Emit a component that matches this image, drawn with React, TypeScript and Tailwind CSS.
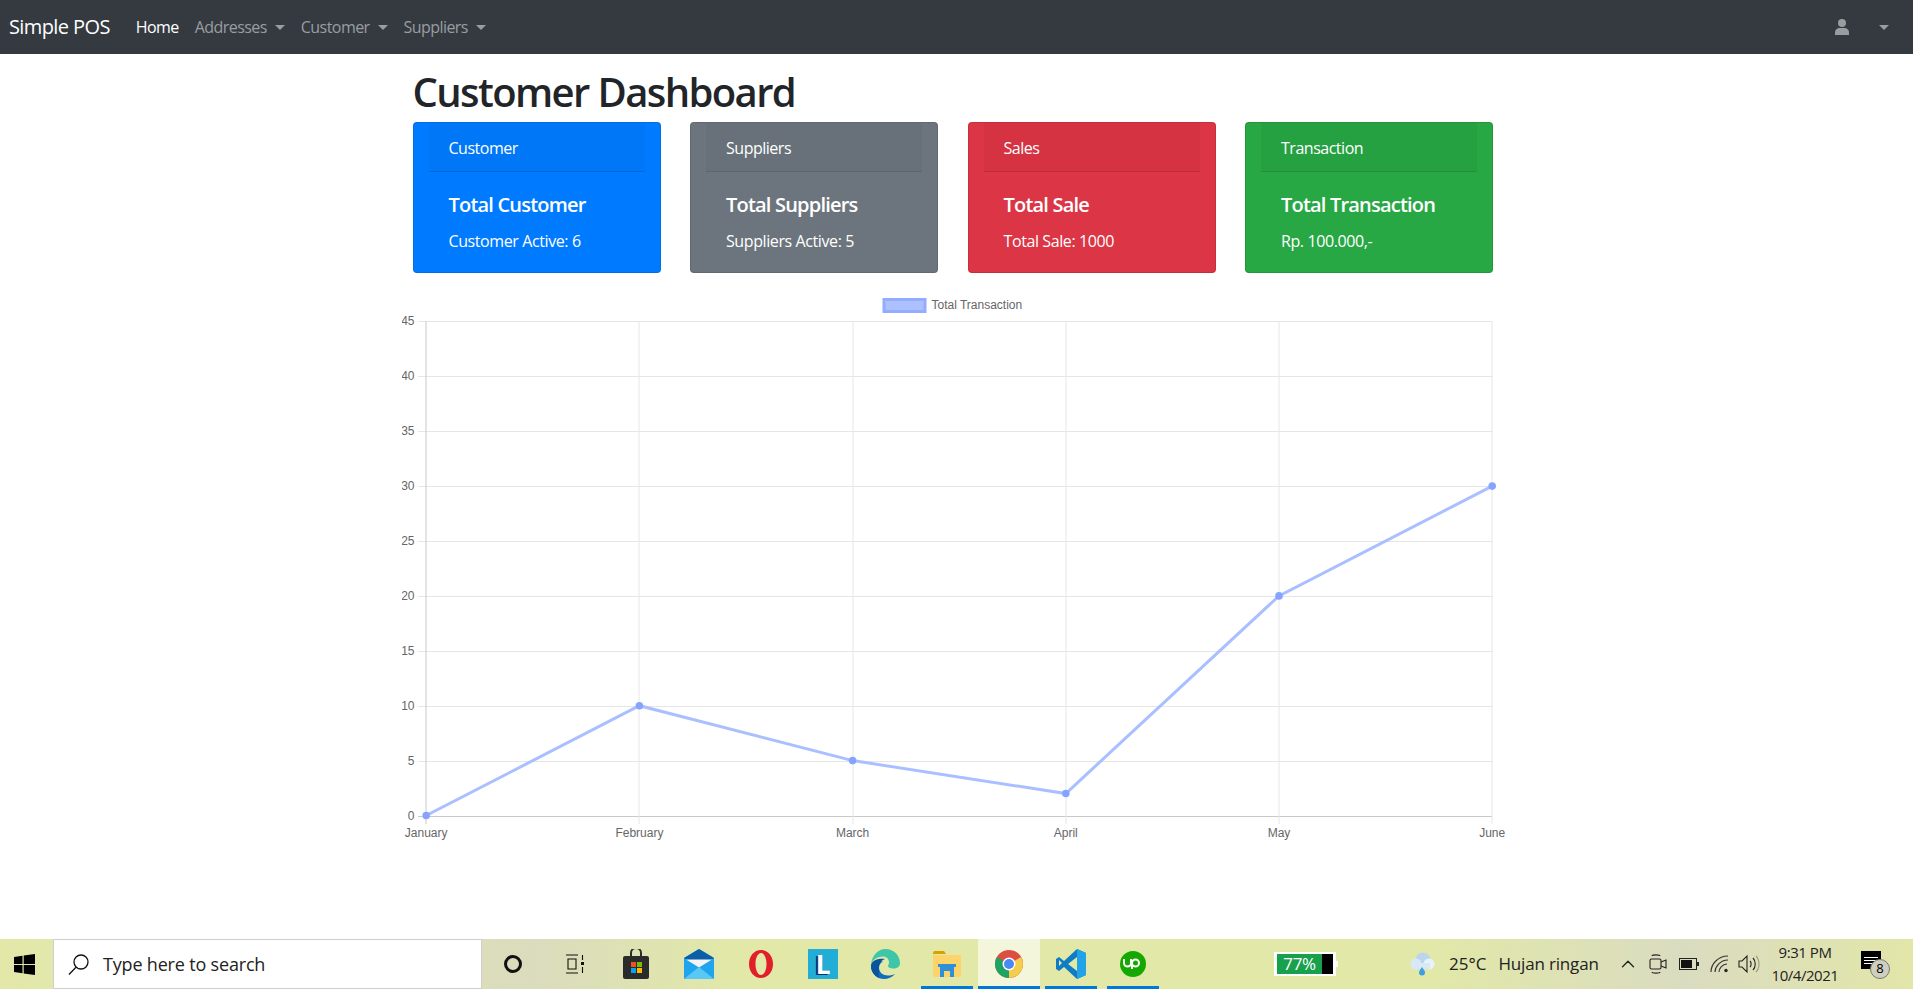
import { ChevronUp } from 'lucide-react';

const sans = "font-['Open_Sans','Noto_Sans',sans-serif]";

const cards = [
  { head: 'Customer', title: 'Total Customer', text: 'Customer Active: 6', bg: 'bg-[#007bff]' },
  { head: 'Suppliers', title: 'Total Suppliers', text: 'Suppliers Active: 5', bg: 'bg-[#6c757d]' },
  { head: 'Sales', title: 'Total Sale', text: 'Total Sale: 1000', bg: 'bg-[#dc3545]' },
  { head: 'Transaction', title: 'Total Transaction', text: 'Rp. 100.000,-', bg: 'bg-[#28a745]' },
];

const months = ['January', 'February', 'March', 'April', 'May', 'June'];
const values = [0, 10, 5, 2, 20, 30];
const ticks = [0, 5, 10, 15, 20, 25, 30, 35, 40, 45];

const xAt = (i: number) => 425.7 + i * 213.2;
const yAt = (v: number) => 814.5 - v * 10.98;

function Caret() {
  return <span className="ml-[8px] mt-[1px] h-0 w-0 border-x-[5px] border-t-[5px] border-x-transparent border-t-current" />;
}

function NavItem({ label, dropdown, active }: { label: string; dropdown?: boolean; active?: boolean }) {
  return (
    <a className={`flex items-center px-2 ${active ? 'text-white' : 'text-[#9a9da0]'}`}>
      {label}
      {dropdown && <Caret />}
    </a>
  );
}

function Navbar() {
  return (
    <nav className={`flex h-[54px] shrink-0 items-center bg-[#343a40] pl-[9px] pr-[24px] text-[16px] ${sans} tracking-[-0.035em]`}>
      <a className="mr-[18px] text-[20px] tracking-[-0.03em] text-white">Simple POS</a>
      <NavItem label="Home" active />
      <NavItem label="Addresses" dropdown />
      <NavItem label="Customer" dropdown />
      <NavItem label="Suppliers" dropdown />
      <div className="ml-auto flex items-center text-[#9a9da0]">
        <svg width="16" height="16" viewBox="0 0 16 16" fill="currentColor">
          <circle cx="8" cy="4" r="4" />
          <path d="M1 16v-2.5C1 10.5 3.500 9 5.500 9h5c2 0 4.500 1.500 4.500 4.500V16z" />
        </svg>
        <span className="ml-[29px] h-0 w-0 border-x-[5px] border-t-[5px] border-x-transparent border-t-current" />
      </div>
    </nav>
  );
}

function Chart() {
  return (
    <svg viewBox="401.5 285 1110 560" width="1110" height="560" className="mt-[13px] block">
      <rect x="883.500" y="298.500" width="41" height="12" fill="#adc1ff" stroke="#93acff" strokeWidth="3" />
      <text x="931" y="308" fontSize="12" fill="#666" fontFamily="Liberation Sans, sans-serif">Total Transaction</text>
      {ticks.map((t) => (
        <g key={t}>
          <line
            x1="417.500"
            x2="1491.700"
            y1={Math.round(yAt(t)) + 0.5}
            y2={Math.round(yAt(t)) + 0.5}
            stroke={t === 0 ? '#c9c9c9' : '#e6e6e6'}
          />
          <text x="414" y={yAt(t) + 4} fontSize="12" fill="#666" textAnchor="end" fontFamily="Liberation Sans, sans-serif">{t}</text>
        </g>
      ))}
      {months.map((m, i) => (
        <g key={m}>
          <line
            x1={Math.floor(xAt(i)) + 0.5}
            x2={Math.floor(xAt(i)) + 0.5}
            y1="320"
            y2="823"
            stroke={i === 0 ? '#c9c9c9' : '#e6e6e6'}
          />
          <text x={xAt(i)} y="836" fontSize="12" fill="#666" textAnchor="middle" fontFamily="Liberation Sans, sans-serif">{m}</text>
        </g>
      ))}
      <polyline
        points={values.map((v, i) => `${xAt(i)},${yAt(v)}`).join(' ')}
        fill="none"
        stroke="#a9bfff"
        strokeWidth="3"
      />
      {values.map((v, i) => (
        <circle key={i} cx={xAt(i)} cy={yAt(v)} r="3.800" fill="#86a4ff" />
      ))}
    </svg>
  );
}

function Slot({ children, line, active }: { children: React.ReactNode; line?: boolean; active?: boolean }) {
  return (
    <div className={`relative flex h-full w-[62px] items-center justify-center ${active ? 'bg-[#f4f6dc]' : ''}`}>
      {children}
      {line && <span className={`absolute bottom-0 h-[3px] bg-[#0078d7] ${active ? 'inset-x-0' : 'inset-x-[5px]'}`} />}
    </div>
  );
}

function Taskbar() {
  return (
    <footer className={`mt-auto flex h-[50px] shrink-0 items-center bg-[linear-gradient(90deg,#e3e8a9_0%,#dadcbd_28%,#e1e8a8_38%,#e1e8a8_75%,#dadcc0_88%,#e2e6a8_100%)] ${sans}`}>
      <div className="flex h-full w-[53px] shrink-0 items-center justify-center pr-[5px]">
        <svg width="21" height="21" viewBox="0 0 21 21" fill="#000">
          <path d="M0 3l8.500-1.200v8.200H0zM9.700 1.600L21 0v10H9.700zM0 11h8.500v8.200L0 18zM9.700 11H21v10L9.700 19.400z" />
        </svg>
      </div>
      <div className="flex h-full w-[429px] shrink-0 items-center border border-[#cfcfcf] bg-white pl-[14px] text-[18px] tracking-[-0.01em] text-[#222]">
        <svg width="21" height="21" viewBox="0 0 21 21" fill="none" stroke="#111" strokeWidth="1.300">
          <circle cx="13" cy="8" r="7" />
          <path d="M8 13.200L1 20.500" />
        </svg>
        <span className="ml-[14px]">Type here to search</span>
      </div>
      <Slot>
        <span className="h-[18px] w-[18px] rounded-full border-[3px] border-[#111]" />
      </Slot>
      <Slot>
        <svg width="20" height="20" viewBox="0 0 20 20" fill="none" stroke="#111" strokeWidth="1.100">
          <path d="M1 1h12M1 19h12M3 5h8v10H3zM17.500 1v5M17.500 13v6" />
          <rect x="16" y="8" width="3" height="3" fill="#111" stroke="none" />
        </svg>
      </Slot>
      <Slot>
        <svg className="-ml-[2px]" width="28" height="30" viewBox="0 0 28 30">
          <path d="M9 8V4a5 5 0 0 1 10 0v4" fill="none" stroke="#2b2b2b" strokeWidth="2" />
          <rect x="1" y="7" width="26" height="23" rx="2" fill="#2b2b2b" />
          <rect x="9" y="13" width="5" height="5" fill="#f25022" />
          <rect x="15" y="13" width="5" height="5" fill="#7fba00" />
          <rect x="9" y="19" width="5" height="5" fill="#00a4ef" />
          <rect x="15" y="19" width="5" height="5" fill="#ffb900" />
        </svg>
      </Slot>
      <Slot>
        <svg width="30" height="30" viewBox="0 0 30 30">
          <path d="M0 9L15 0l15 9v21H0z" fill="#1fa5ee" />
          <path d="M15 0l15 9-15 9L0 9z" fill="#0a5fa8" />
          <path d="M2 10.500h26L15 18.500z" fill="#f4f4f4" />
          <path d="M0 30l15-12 15 12z" fill="#5ac8f5" />
        </svg>
      </Slot>
      <Slot>
        <svg width="26" height="30" viewBox="0 0 26 30">
          <path
            fillRule="evenodd"
            d="M13 1c7 0 12 6.300 12 14s-5 14-12 14S1 22.700 1 15 6 1 13 1zm0 3c-3.300 0-5.500 5-5.500 11s2.200 11 5.500 11 5.500-5 5.500-11S16.300 4 13 4z"
            fill="#e01f2a"
          />
        </svg>
      </Slot>
      <Slot>
        <div className="flex h-[30px] w-[30px] items-center justify-center bg-[#22add7] text-[26px] leading-none font-bold text-white [text-shadow:-2px_1px_0_#0a2a6a]">
          L
        </div>
      </Slot>
      <Slot>
        <svg width="30" height="30" viewBox="0 0 30 30">
          <path d="M1 17C1 7 8 0 15.500 0 24 0 30 6.500 30 14c0 4-3 5.500-7 5.500-3 0-5-1-5-2.500 0-1 1-1.500 1-3.500 0-4-3-6-6-6-6 0-12 4-12 9.500z" fill="#3ec6a8" />
          <path d="M1 17c0 7 6 13 13 13 4 0 8-1.500 11-5-3 1.500-5 1.500-7 1.500-5 0-9-3-9-8 0-3 2-5 4-6-6 0-12 1-12 4.500z" fill="#0f6cbd" />
          <path d="M9 18c0-4 3-7 6-8-3-1-14 0-14 7 0 6 4 10 8 12-1-3-0-7 0-11z" fill="#0a549e" />
        </svg>
      </Slot>
      <Slot line>
        <svg width="28" height="26" viewBox="0 0 28 26">
          <path d="M0 2a2 2 0 0 1 2-2h9l2 3H0z" fill="#d9a100" />
          <path d="M0 4h28v20a2 2 0 0 1-2 2H2a2 2 0 0 1-2-2z" fill="#fcd469" />
          <path d="M7 26V16h14v10h-4v-6h-6v6z" fill="#2f8fd8" />
          <rect x="5" y="13" width="18" height="3" fill="#2f8fd8" />
        </svg>
      </Slot>
      <Slot line active>
        <svg width="28" height="28" viewBox="0 0 28 28">
          <circle cx="14" cy="14" r="14" fill="#db4f43" />
          <path d="M14 14L26.100 7A14 14 0 0 1 14 28z" fill="#f5cc4b" />
          <path d="M14 14L14 28A14 14 0 0 1 1.900 7z" fill="#1fa363" />
          <circle cx="14" cy="14" r="6.500" fill="#fff" />
          <circle cx="14" cy="14" r="5" fill="#4a89f3" />
        </svg>
      </Slot>
      <Slot line>
        <svg width="30" height="30" viewBox="0 0 30 30">
          <path d="M21 0l9 4v22l-9 4-13-12-5 4-3-2v-10l3-2 5 4z" fill="#0f7cc4" />
          <path d="M21 0l9 4v22l-9 4z" fill="#22a3e8" />
          <path d="M21 8v14l-9-7z" fill="#e1e8a8" />
          <path d="M3 11l3 3-3 3z" fill="#e1e8a8" />
        </svg>
      </Slot>
      <Slot line>
        <div className="flex h-[26px] w-[26px] items-center justify-center rounded-full bg-[#14a800]">
          <svg width="20" height="12" viewBox="0 0 20 12" fill="none" stroke="#fff" strokeWidth="2">
            <path d="M1 1v4a3.500 3.500 0 0 0 7 0V1M9 11V5a3.500 3.500 0 1 1 3.500 3.500c-1 0-2-.5-3-1.500" />
          </svg>
        </div>
      </Slot>

      <div className="ml-[110px] flex h-[24px] w-[62px] shrink-0 items-center bg-white px-[3px]">
        <div className="flex h-[20px] w-[56px] bg-black">
          <span className="flex w-[45px] items-center justify-center bg-[#18a04d] text-[17px] tracking-[-0.02em] text-white">77%</span>
        </div>
      </div>
      <span className="h-[6px] w-[2px] shrink-0 self-center bg-white" />

      <svg className="ml-[71px] shrink-0" width="26" height="24" viewBox="0 0 26 24">
        <circle cx="14" cy="8" r="7.500" fill="#bcd4ec" />
        <circle cx="7" cy="12" r="5.500" fill="#d8e8f6" />
        <circle cx="20" cy="12" r="5.500" fill="#e8f2fb" />
        <rect x="6" y="11" width="15" height="6" fill="#d8e8f6" />
        <path d="M13 15c2 3 3 4 3 5.500a3 3 0 0 1-6 0c0-1.500 1-2.500 3-5.500z" fill="#3b9fe0" />
      </svg>
      <span className="ml-[14px] whitespace-nowrap text-[17px] text-[#222]">25°C</span>
      <span className="ml-[12px] whitespace-nowrap text-[17px] tracking-[-0.01em] text-[#222]">Hujan ringan</span>

      <ChevronUp className="ml-[18px] shrink-0 text-[#222]" size={22} strokeWidth={1.400} />
      <svg className="ml-[10px] shrink-0" width="18" height="22" viewBox="0 0 18 22" fill="none" stroke="#222" strokeWidth="1.100">
        <path d="M3 3c0-1.500 8-1.500 8 0M3 19c0 1.500 8 1.500 8 0" />
        <rect x="1" y="6" width="11" height="10" rx="1.500" />
        <path d="M12 9l5-2v8l-5-2" />
      </svg>
      <svg className="ml-[12px] shrink-0" width="20" height="12" viewBox="0 0 20 12">
        <rect x="0.500" y="0.500" width="17" height="11" fill="none" stroke="#222" />
        <rect x="2" y="2" width="11" height="8" fill="#111" />
        <rect x="18" y="4" width="2" height="4" fill="#222" />
      </svg>
      <svg className="ml-[11px] shrink-0" width="20" height="18" viewBox="0 0 20 18" fill="none" stroke="#333" strokeWidth="1.100">
        <path d="M1 17C1 9 8 1 18 1M5 17c0-5 5-12 13-12M9 17c0-3 3-8 8-8" />
        <circle cx="16" cy="15.500" r="1.700" fill="#222" stroke="none" />
      </svg>
      <svg className="ml-[8px] shrink-0" width="22" height="20" viewBox="0 0 22 20" fill="none" stroke="#222" strokeWidth="1.100">
        <path d="M1 7h3l5-5v16l-5-5H1zM12 7c1.500 1.500 1.500 4.500 0 6M15 4c3 3 3 9 0 12" />
        <path d="M18 2c4 4 4 12 0 16" stroke="#9a9a80" />
      </svg>

      <div className="ml-auto flex w-[90px] shrink-0 flex-col items-center text-[15px] leading-[23px] tracking-[-0.03em] text-[#222]">
        <span>9:31 PM</span>
        <span>10/4/2021</span>
      </div>
      <div className="relative mr-[32px] ml-[11px] h-[30px] w-[20px] shrink-0">
        <div className="mt-[2px] flex h-[18px] w-[20px] flex-col justify-center gap-[2px] bg-black px-[3px]">
          <span className="h-px bg-white" />
          <span className="h-px bg-white" />
          <span className="h-px bg-white" />
        </div>
        <span className="absolute top-[10px] left-[9px] flex h-[20px] w-[20px] items-center justify-center rounded-full border border-[#777] bg-[#cfcfc0] text-[13px] text-black">8</span>
      </div>
    </footer>
  );
}

export default function App() {
  return (
    <div className="flex h-[989px] w-full flex-col overflow-hidden bg-white">
      <Navbar />
      <main className={`mx-auto w-[1140px] px-[15px] ${sans}`}>
        <h1 className="mt-[14px] mb-[6px] pl-[11px] text-[40px] leading-[48px] font-semibold tracking-[-0.04em] text-[#212529]">Customer Dashboard</h1>
        <div className="flex gap-[29.5px] pl-[11px]">
          {cards.map((c) => (
            <div key={c.head} className={`w-[248px] rounded-[4px] border border-black/10 px-[15px] text-white ${c.bg}`}>
              <div className="h-[49px] border-b border-black/10 bg-black/[.03] pl-[20px] text-[16px] leading-[50px] tracking-[-0.03em]">{c.head}</div>
              <div className="pt-[21px] pb-[19px] pl-[20px]">
                <h5 className="mb-[12px] text-[20px] leading-[24px] font-semibold tracking-[-0.04em]">{c.title}</h5>
                <p className="text-[16px] leading-[24px] tracking-[-0.025em]">{c.text}</p>
              </div>
            </div>
          ))}
        </div>
        <Chart />
      </main>
      <Taskbar />
    </div>
  );
}
